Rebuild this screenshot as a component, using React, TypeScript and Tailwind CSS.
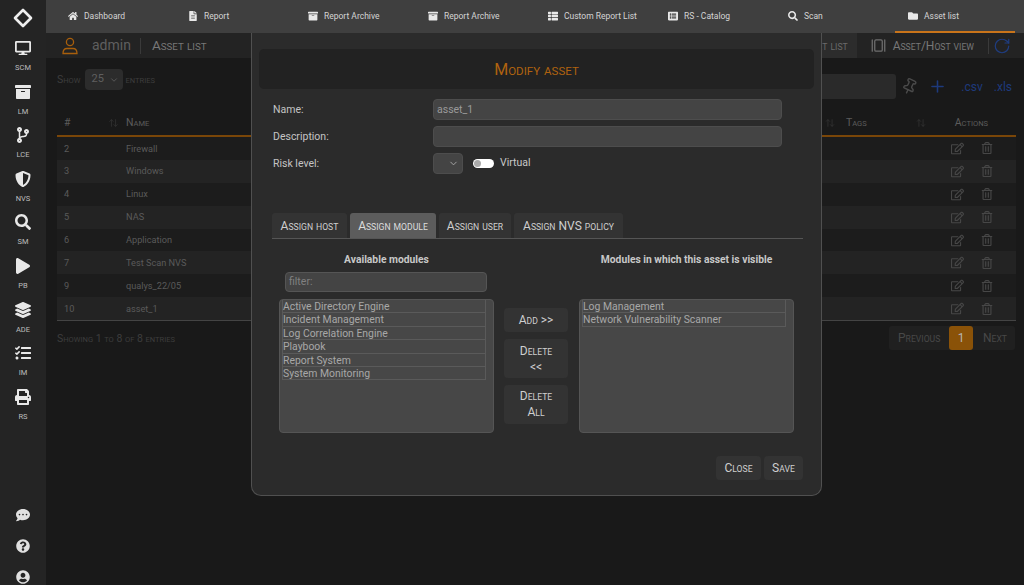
import {
  FaArchive,
  FaCodeBranch,
  FaCommentDots,
  FaDesktop,
  FaFileAlt,
  FaFolder,
  FaHome,
  FaLayerGroup,
  FaListAlt,
  FaPlay,
  FaPrint,
  FaQuestionCircle,
  FaRegEdit,
  FaRegTrashAlt,
  FaSearch,
  FaShieldAlt,
  FaTasks,
  FaThList,
  FaUserCircle,
} from "react-icons/fa";
import { ArrowUpDown, ChevronDown, GalleryHorizontal, Pin, Plus, RotateCw } from "lucide-react";

const SIDE = [
  { icon: FaDesktop, label: "SCM" },
  { icon: FaArchive, label: "LM" },
  { icon: FaCodeBranch, label: "LCE" },
  { icon: FaShieldAlt, label: "NVS" },
  { icon: FaSearch, label: "SM" },
  { icon: FaPlay, label: "PB" },
  { icon: FaLayerGroup, label: "ADE" },
  { icon: FaTasks, label: "IM" },
  { icon: FaPrint, label: "RS" },
];

const NAV = [
  { icon: FaHome, label: "Dashboard" },
  { icon: FaFileAlt, label: "Report" },
  { icon: FaArchive, label: "Report Archive" },
  { icon: FaArchive, label: "Report Archive" },
  { icon: FaThList, label: "Custom Report List" },
  { icon: FaListAlt, label: "RS - Catalog" },
  { icon: FaSearch, label: "Scan" },
  { icon: FaFolder, label: "Asset list", active: true },
];

const ROWS = [
  ["2", "Firewall"],
  ["3", "Windows"],
  ["4", "Linux"],
  ["5", "NAS"],
  ["6", "Application"],
  ["7", "Test Scan NVS"],
  ["9", "qualys_22/05"],
  ["10", "asset_1"],
];

const AVAILABLE = [
  "Active Directory Engine",
  "Incident Management",
  "Log Correlation Engine",
  "Playbook",
  "Report System",
  "System Monitoring",
];

const VISIBLE = ["Log Management", "Network Vulnerability Scanner"];

const TABS = [
  { label: "Assign host", w: "w-[75px]" },
  { label: "Assign module", w: "w-[86px]", active: true },
  { label: "Assign user", w: "w-[72px]" },
  { label: "Assign NVS policy", w: "w-[109px]" },
];

// the installed Roboto has its own small caps, the original is the browser's scaled kind
function Caps({ text }: { text: string }) {
  const parts = text.split(/([a-z]+)/);
  return (
    <>
      {parts.map((p, i) =>
        /^[a-z]/.test(p) ? (
          <span key={i} className="text-[0.72em] uppercase">
            {p}
          </span>
        ) : (
          p
        ),
      )}
    </>
  );
}

function Logo() {
  return (
    <svg width="20" height="20" viewBox="0 0 20 20" fill="none" stroke="#eeeeee" strokeWidth="2.6">
      <path d="M10 2 L18 10 L10 18 L2 10 Z" strokeLinejoin="round" />
    </svg>
  );
}

function AdminIcon() {
  return (
    <svg width="18" height="18" viewBox="0 0 18 18" fill="none" stroke="#a85f0c" strokeWidth="1.3">
      <circle cx="9" cy="5" r="3.6" />
      <path d="M2 16.5 C2 12.5 4 11.5 6 11.5 H12 C14 11.5 16 12.5 16 16.5 Z" />
    </svg>
  );
}

function ModuleList({ items }: { items: string[] }) {
  return (
    <div className="w-[215px] h-[134px] rounded-[4px] bg-[#474747] border border-[#555] pl-[2px] pr-[7px]">
      {items.map((m) => (
        <div
          key={m}
          className="h-[13.4px] leading-[13px] text-[10.4px] text-[#a8a8a8] border border-[#5a5a5a] border-t-0 whitespace-nowrap"
        >
          {m}
        </div>
      ))}
    </div>
  );
}

function ModalButton({ children, className }: { children: React.ReactNode; className: string }) {
  return (
    <div
      className={`flex items-center justify-center text-center rounded-[4px] bg-[#333] text-[#cfcfcf] text-[12px] leading-[15px] pt-[1px] ${className}`}
    >
      {children}
    </div>
  );
}

function Modal() {
  return (
    <div className="absolute left-[251px] top-[33px] w-[571px] h-[463px] rounded-b-[10px] bg-[#2b2b2b] border border-[#505050] border-t-0 px-[7px] pt-[16px]">
      <div className="h-[40px] rounded-[5px] bg-[#222] flex items-center justify-center pt-[2px] text-[#b0620f] text-[16px]">
        <span>
          <Caps text="Modify asset" />
        </span>
      </div>

      <div className="mt-[10px] pl-[14px] text-[10.5px] text-[#c4c4c4]">
        <div className="flex items-center h-[21px]">
          <span className="w-[160px]">Name:</span>
          <div className="w-[349px] h-[21px] rounded-[4px] bg-[#444] border border-[#4d4d4d] pl-[3px] leading-[19px] text-[#9a9a9a]">
            asset_1
          </div>
        </div>
        <div className="flex items-center h-[21px] mt-[6px]">
          <span className="w-[160px]">Description:</span>
          <div className="w-[349px] h-[21px] rounded-[4px] bg-[#444] border border-[#4d4d4d]" />
        </div>
        <div className="flex items-center h-[21px] mt-[6px]">
          <span className="w-[160px]">Risk level:</span>
          <div className="w-[30px] h-[21px] rounded-[4px] bg-[#444] border border-[#4d4d4d] flex items-center justify-end pr-[3px]">
            <ChevronDown size={11} className="text-[#aaa]" />
          </div>
          <div className="ml-[10px] w-[21px] h-[9px] rounded-full bg-white flex items-center pl-[1px]">
            <div className="w-[7px] h-[7px] rounded-full bg-[#aaa]" />
          </div>
          <span className="ml-[6px] text-[#c8c8c8] -mt-[1px]">Virtual</span>
        </div>
      </div>

      <div className="mt-[39px] ml-[13px] w-[531px] h-[26px] flex gap-[3px] border-b border-[#555]">
        {TABS.map((t) => (
          <div
            key={t.label}
            className={`${t.w} h-[25px] rounded-t-[3px] flex items-center justify-center text-[12px] whitespace-nowrap ${
              t.active ? "bg-[#5c5c5c] text-[#dcdcdc]" : "bg-[#333] text-[#cfcfcf]"
            }`}
          >
            <span>
              <Caps text={t.label} />
            </span>
          </div>
        ))}
      </div>

      <div className="flex ml-[20px] mt-[14px]">
        <div className="w-[215px]">
          <div className="text-center text-[10.3px] font-bold text-[#c8c8c8] leading-[13px]">Available modules</div>
          <div className="mt-[6px] ml-[6px] w-[202px] h-[20px] rounded-[4px] bg-[#444] border border-[#555] pl-[3px] text-[10.5px] leading-[18px] text-[#808080]">
            filter:
          </div>
          <div className="mt-[7px]">
            <ModuleList items={AVAILABLE} />
          </div>
        </div>
        <div className="w-[64px] ml-[10px] pt-[55px] flex flex-col gap-[7px]">
          <ModalButton className="h-[24px]">
            <span>
              <Caps text="Add >>" />
            </span>
          </ModalButton>
          <ModalButton className="h-[39px]">
            <span>
              <Caps text="Delete" />
              <br />
              &lt;&lt;
            </span>
          </ModalButton>
          <ModalButton className="h-[39px]">
            <span>
              <Caps text="Delete" />
              <br />
              <Caps text="All" />
            </span>
          </ModalButton>
        </div>
        <div className="w-[215px] ml-[11px]">
          <div className="text-center text-[10.3px] font-bold text-[#c8c8c8] leading-[13px] whitespace-nowrap">
            Modules in which this asset is visible
          </div>
          <div className="mt-[33px]">
            <ModuleList items={VISIBLE} />
          </div>
        </div>
      </div>

      <div className="flex justify-end gap-[3px] mt-[23px] mr-[11px]">
        <ModalButton className="w-[45px] h-[24px]">
          <span>
            <Caps text="Close" />
          </span>
        </ModalButton>
        <ModalButton className="w-[39px] h-[24px]">
          <span>
            <Caps text="Save" />
          </span>
        </ModalButton>
      </div>
    </div>
  );
}

export default function App() {
  return (
    <div className="relative flex w-[1024px] h-[585px] overflow-hidden bg-[#191919] font-['Roboto',sans-serif]">
      <aside className="w-[46px] h-full shrink-0 bg-[#242424] flex flex-col items-center">
        <div className="h-[35px] flex items-center justify-center">
          <Logo />
        </div>
        <div className="mt-[5px] flex flex-col items-center">
          {SIDE.map((s) => (
            <div key={s.label} className="h-[43.6px] flex flex-col items-center text-[#e8e8e8]">
              <s.icon size={16} />
              <span className="mt-[7px] text-[7.5px] leading-[10px] text-[#bdbdbd]">{s.label}</span>
            </div>
          ))}
        </div>
        <div className="mt-auto pb-[1px] flex flex-col items-center gap-[17px] text-[#e0e0e0]">
          <FaCommentDots size={14} />
          <FaQuestionCircle size={14} />
          <FaUserCircle size={14} />
        </div>
      </aside>

      <div className="flex-1 flex flex-col min-w-0">
        <nav className="h-[33px] shrink-0 bg-[#3f3f3f] pl-[9px] grid grid-cols-[repeat(8,120px)]">
          {NAV.map((n, i) => (
            <div
              key={i}
              className={`flex items-center gap-[6px] pl-[13px] pt-[1px] text-[8.5px] text-[#d4d4d4] border-b-2 ${
                n.active ? "border-[#c9741a]" : "border-transparent"
              }`}
            >
              <n.icon size={10} className="text-[#e8e8e8] shrink-0" />
              <span className="whitespace-nowrap">{n.label}</span>
            </div>
          ))}
        </nav>

        <header className="h-[25px] shrink-0 bg-[#232323] flex items-center text-[#777]">
          <div className="ml-[15px]">
            <AdminIcon />
          </div>
          <span className="ml-[13px] text-[14px] text-[#5f5f5f]">admin</span>
          <div className="ml-[9px] w-px h-[16px] bg-[#3a3a3a]" />
          <span className="ml-[11px] text-[13.5px] text-[#777]">
            <Caps text="Asset list" />
          </span>
          <div className="ml-auto w-[131px] h-full bg-[#2c2c2c] flex items-center justify-end pr-[9px] text-[12px] text-[#6a6a6a]">
            <span>
              <Caps text="Asset list" />
            </span>
          </div>
          <GalleryHorizontal size={15} className="ml-[14px] text-[#6f6f6f]" />
          <span className="ml-[7px] text-[12px] text-[#777] whitespace-nowrap">
            <Caps text="Asset/Host view" />
          </span>
          <div className="ml-[14px] w-px h-[16px] bg-[#3a3a3a]" />
          <RotateCw size={18} strokeWidth={1.6} className="ml-[4px] mr-[13px] text-[#1f3d80]" />
        </header>

        <main className="flex-1 pl-[11px] pr-[8px]">
          <div className="h-[52px] flex items-start text-[#3d3d3d]">
            <div className="flex items-center mt-[11px] text-[10.5px]">
              <span>
                <Caps text="Show" />
              </span>
              <div className="ml-[4px] w-[38px] h-[21px] rounded-[4px] bg-[#2c2c2c] flex items-center pl-[7px] text-[11px] text-[#5f5f5f]">
                25
                <ChevronDown size={10} className="ml-[5px]" />
              </div>
              <span className="ml-[3px]">
                <Caps text="entries" />
              </span>
            </div>
            <div className="ml-auto flex items-center mt-[16px]">
              <div className="w-[120px] h-[25px] rounded-[3px] bg-[#2a2a2a]" />
              <Pin size={17} className="ml-[5px] rotate-[25deg] text-[#4a4a4a]" />
              <Plus size={19} className="ml-[10px] text-[#1e3a7c]" />
              <span className="ml-[14px] text-[12px] text-[#1e3a7c]">.csv</span>
              <span className="ml-[11px] mr-[4px] text-[12px] text-[#1e3a7c]">.xls</span>
            </div>
          </div>

          <div className="h-[27px] flex items-center pt-[1px] border-b-[2px] border-[#7a4608] text-[10.5px] text-[#5c5c5c]">
            <span className="w-[47px] pl-[7px]">#</span>
            <ArrowUpDown size={10} className="w-[19px] text-[#333]" />
            <span className="ml-[3px]">
              <Caps text="Name" />
            </span>
            <ArrowUpDown size={10} className="ml-auto text-[#333]" />
            <span className="ml-[11px]">
              <Caps text="Tags" />
            </span>
            <ArrowUpDown size={10} className="ml-[49px] text-[#333]" />
            <span className="ml-[29px] mr-[28px]">
              <Caps text="Actions" />
            </span>
          </div>

          {ROWS.map(([id, name], i) => (
            <div
              key={id}
              className={`h-[22.9px] flex items-center text-[9.2px] text-[#5a5a5a] ${i % 2 === 1 ? "bg-[#232323]" : "bg-[#1c1c1c]"}`}
            >
              <span className="w-[69px] pl-[7px]">{id}</span>
              <span>{name}</span>
              <FaRegEdit size={13} className="ml-auto text-[#474747]" />
              <FaRegTrashAlt size={12} className="ml-[17px] mr-[23px] text-[#474747]" />
            </div>
          ))}
          <div className="h-px bg-[#444]" />

          <div className="flex items-start mt-[5px]">
            <span className="mt-[5px] text-[10.5px] text-[#3d3d3d]">
              <Caps text="Showing 1 to 8 of 8 entries" />
            </span>
            <div className="ml-auto mr-[1px] h-[24px] w-[126px] rounded-[3px] bg-[#202020] flex items-center text-[12px] text-[#484848]">
              <span className="ml-[9px] w-[42px] whitespace-nowrap">
                <Caps text="Previous" />
              </span>
              <span className="ml-[9px] w-[24px] h-[24px] rounded-[3px] bg-[#8a5208] flex items-center justify-center text-[#b5b5b5]">1</span>
              <span className="ml-[10px]">
                <Caps text="Next" />
              </span>
            </div>
          </div>
        </main>
      </div>

      <Modal />
    </div>
  );
}
